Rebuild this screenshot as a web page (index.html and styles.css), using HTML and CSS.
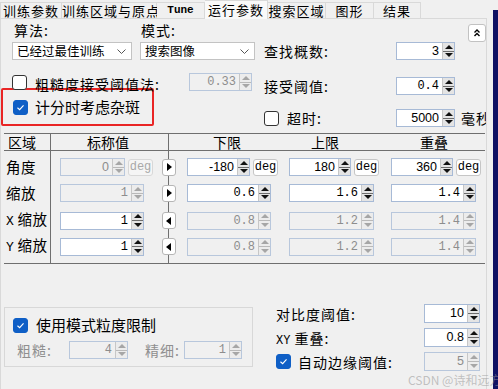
FILE: index.html
```html
<!DOCTYPE html>
<html lang="zh-CN">
<head>
    <meta charset="UTF-8">
    <meta name="viewport" content="width=device-width, initial-scale=1.0">
    <title>运行参数</title>
    <link rel="stylesheet" href="styles.css">
</head>
<body>
    <div class="window">
        <div class="tabs">
            <div class="tab tab-62">训练参数</div>
            <div class="tab tab-95">训练区域与原点</div>
            <div class="tab tab-48 latin">Tune</div>
            <div class="tab tab-63 active">运行参数</div>
            <div class="tab tab-58">搜索区域</div>
            <div class="tab tab-48">图形</div>
            <div class="tab tab-47">结果</div>
            <div class="tab-fill"></div>
        </div>

        <div class="panel">
            <div class="top">
                <div class="top-left">
                    <div class="pair labels"><span>算法:</span><span>模式:</span></div>
                    <div class="pair combos">
                        <div class="combo">已经过最佳训练
                            <svg viewBox="0 0 9 5"><polyline points="0.5,0.5 4.5,4.5 8.5,0.5" fill="none" stroke="#555" stroke-width="1"/></svg>
                        </div>
                        <div class="combo">搜索图像
                            <svg viewBox="0 0 9 5"><polyline points="0.5,0.5 4.5,4.5 8.5,0.5" fill="none" stroke="#555" stroke-width="1"/></svg>
                        </div>
                    </div>
                    <div class="rough">
                        <span class="cb"></span>
                        <span class="rough-label">粗糙度接受阈值法:</span>
                        <div class="spin w63 off"><span class="val mono">0.33</span><span class="arrows"><i class="up"></i><i class="down"></i></span></div>
                    </div>
                    <div class="highlight">
                        <span class="cb on"><svg viewBox="0 0 15 15"><polyline points="4,7.8 6.5,10 11,5" fill="none" stroke="#fff" stroke-width="1.3"/></svg></span>
                        <span class="big">计分时考虑杂斑</span>
                    </div>
                </div>

                <div class="top-right">
                    <div class="collapse-row">
                        <button class="collapse">
                            <svg viewBox="0 0 10 10"><polyline points="2.5,4.5 5,2 7.5,4.5" fill="none" stroke="#000" stroke-width="1.4"/><polyline points="2.5,8 5,5.5 7.5,8" fill="none" stroke="#000" stroke-width="1.4"/></svg>
                        </button>
                    </div>
                    <div class="field">
                        <span class="field-label">查找概数:</span>
                        <div class="spin w59"><span class="val">3</span><span class="arrows"><i class="up"></i><i class="down"></i></span></div>
                    </div>
                    <div class="field accept">
                        <span class="field-label">接受阈值:</span>
                        <div class="spin w59"><span class="val mono">0.4</span><span class="arrows"><i class="up"></i><i class="down"></i></span></div>
                    </div>
                    <div class="field timeout">
                        <span class="cb"></span>
                        <span class="timeout-label">超时:</span>
                        <div class="spin w59"><span class="val">5000</span><span class="arrows"><i class="up"></i><i class="down"></i></span></div>
                        <span class="unit">毫秒</span>
                    </div>
                </div>
            </div>

            <div class="grid-table">
                <div class="thead">
                    <span>区域</span><span>标称值</span><span>下限</span><span>上限</span><span>重叠</span>
                </div>
                <div class="tbody">
                    <div class="trow">
                        <span class="rlabel">角度</span>
                        <div class="cell">
                            <div class="spin w65 off"><span class="val">0</span><span class="arrows"><i class="up"></i><i class="down"></i></span></div>
                            <span class="deg off">deg</span>
                        </div>
                        <div class="cell"><span class="nav right"></span></div>
                        <div class="cell">
                            <div class="spin w63"><span class="val">-180</span><span class="arrows"><i class="up"></i><i class="down"></i></span></div>
                            <span class="deg">deg</span>
                        </div>
                        <div class="cell">
                            <div class="spin w62"><span class="val">180</span><span class="arrows"><i class="up"></i><i class="down"></i></span></div>
                            <span class="deg">deg</span>
                        </div>
                        <div class="cell">
                            <div class="spin w62"><span class="val">360</span><span class="arrows"><i class="up"></i><i class="down"></i></span></div>
                            <span class="deg">deg</span>
                        </div>
                    </div>
                    <div class="trow">
                        <span class="rlabel">缩放</span>
                        <div class="cell"><div class="spin w84 off"><span class="val mono">1</span><span class="arrows"><i class="up"></i><i class="down"></i></span></div></div>
                        <div class="cell"><span class="nav right"></span></div>
                        <div class="cell"><div class="spin w84"><span class="val mono">0.6</span><span class="arrows"><i class="up"></i><i class="down"></i></span></div></div>
                        <div class="cell"><div class="spin w85"><span class="val mono">1.6</span><span class="arrows"><i class="up"></i><i class="down"></i></span></div></div>
                        <div class="cell"><div class="spin w85"><span class="val mono">1.4</span><span class="arrows"><i class="up"></i><i class="down"></i></span></div></div>
                    </div>
                    <div class="trow">
                        <span class="rlabel"><span class="mono">X</span> 缩放</span>
                        <div class="cell"><div class="spin w84"><span class="val mono">1</span><span class="arrows"><i class="up"></i><i class="down"></i></span></div></div>
                        <div class="cell"><span class="nav left"></span></div>
                        <div class="cell"><div class="spin w84 off"><span class="val mono">0.8</span><span class="arrows"><i class="up"></i><i class="down"></i></span></div></div>
                        <div class="cell"><div class="spin w85 off"><span class="val mono">1.2</span><span class="arrows"><i class="up"></i><i class="down"></i></span></div></div>
                        <div class="cell"><div class="spin w85 off"><span class="val mono">1.4</span><span class="arrows"><i class="up"></i><i class="down"></i></span></div></div>
                    </div>
                    <div class="trow">
                        <span class="rlabel"><span class="mono">Y</span> 缩放</span>
                        <div class="cell"><div class="spin w84"><span class="val mono">1</span><span class="arrows"><i class="up"></i><i class="down"></i></span></div></div>
                        <div class="cell"><span class="nav left"></span></div>
                        <div class="cell"><div class="spin w84 off"><span class="val mono">0.8</span><span class="arrows"><i class="up"></i><i class="down"></i></span></div></div>
                        <div class="cell"><div class="spin w85 off"><span class="val mono">1.2</span><span class="arrows"><i class="up"></i><i class="down"></i></span></div></div>
                        <div class="cell"><div class="spin w85 off"><span class="val mono">1.4</span><span class="arrows"><i class="up"></i><i class="down"></i></span></div></div>
                    </div>
                </div>
            </div>

            <div class="bottom">
                <div class="group">
                    <div class="group-head">
                        <span class="cb on"><svg viewBox="0 0 15 15"><polyline points="4,7.8 6.5,10 11,5" fill="none" stroke="#fff" stroke-width="1.3"/></svg></span>
                        <span class="big">使用模式粒度限制</span>
                    </div>
                    <div class="group-row">
                        <span class="dim coarse">粗糙:</span>
                        <div class="spin w59 off"><span class="val mono">4</span><span class="arrows"><i class="up"></i><i class="down"></i></span></div>
                        <span class="dim fine">精细:</span>
                        <div class="spin w58 off"><span class="val mono">1</span><span class="arrows"><i class="up"></i><i class="down"></i></span></div>
                    </div>
                </div>
                <div class="bottom-right">
                    <div class="brow">
                        <span class="brow-label">对比度阈值:</span>
                        <div class="spin w56"><span class="val">10</span><span class="arrows"><i class="up"></i><i class="down"></i></span></div>
                    </div>
                    <div class="brow">
                        <span class="brow-label"><span class="mono">XY</span> 重叠:</span>
                        <div class="spin w56"><span class="val">0.8</span><span class="arrows"><i class="up"></i><i class="down"></i></span></div>
                    </div>
                    <div class="brow">
                        <span class="cb on"><svg viewBox="0 0 15 15"><polyline points="4,7.8 6.5,10 11,5" fill="none" stroke="#fff" stroke-width="1.3"/></svg></span>
                        <span class="auto-label">自动边缘阈值:</span>
                        <div class="spin w56 off"><span class="val">5</span><span class="arrows"><i class="up"></i><i class="down"></i></span></div>
                    </div>
                </div>
            </div>
        </div>
    </div>
    <div class="strip"></div>
    <div class="watermark">CSDN @诗和远方ya</div>
</body>
</html>
```

FILE: styles.css
```css
* {
    box-sizing: border-box;
}

body {
    margin: 0;
    width: 498px;
    height: 389px;
    overflow: hidden;
    display: flex;
    position: relative;
    background: #f0f0f0;
    color: #000;
    font-family: "Noto Sans CJK SC", "Noto Sans", sans-serif;
}

.mono {
    font-family: "Liberation Mono", monospace;
    font-size: 13px;
    letter-spacing: 0;
}

.window {
    width: 487px;
    flex: none;
}

.strip {
    width: 5px;
    margin: 10px 0 0 6px;
    background: #0f1163;
    flex: none;
}

/* tabs */
.tabs {
    display: flex;
    align-items: flex-end;
    height: 19px;
}

.tab {
    height: 17px;
    border: 1px solid #d9d9d9;
    border-left: none;
    background: #f0f0f0;
    font-size: 13px;
    letter-spacing: 1px;
    line-height: 15px;
    text-align: center;
    white-space: nowrap;
}

.tab:first-child { border-left: 1px solid #d9d9d9; }
.tab.latin { font-family: "Liberation Mono", monospace; font-size: 11px; font-weight: bold; letter-spacing: 0; }
.tab.active { height: 19px; border-bottom: none; background: #f9f9f9; line-height: 17px; }

.tab-47 { width: 47px; }
.tab-48 { width: 48px; }
.tab-58 { width: 58px; }
.tab-62 { width: 62px; }
.tab-63 { width: 63px; }
.tab-95 { width: 95px; }

.tab-fill {
    flex: 1;
    height: 1px;
    background: #d9d9d9;
}

.panel {
    height: 370px;
    border-left: 1px solid #d9d9d9;
    border-right: 1px solid #d9d9d9;
    padding-left: 11px;
    overflow: hidden;
}

/* top section */
.top {
    display: flex;
    gap: 9px;
}

.top-left {
    width: 243px;
    flex: none;
}

.top-right {
    flex: 1;
    font-size: 14px;
    letter-spacing: 1px;
}

.pair {
    display: grid;
    grid-template-columns: 120px 115px;
    column-gap: 8px;
}

.labels {
    margin-top: 3px;
    height: 16px;
    font-size: 14px;
    letter-spacing: 1px;
    line-height: 16px;
}

.labels span { padding-left: 2px; }
.labels span + span { padding-left: 1px; }

.combos {
    margin-top: 4px;
}

.combo {
    height: 18px;
    display: flex;
    align-items: center;
    justify-content: space-between;
    padding: 0 5px 0 4px;
    border: 1px solid #c3c3c3;
    background: #fff;
    font-size: 12.5px;
    line-height: 16px;
}

.combo svg {
    width: 9px;
    height: 5px;
}

.cb {
    width: 15px;
    height: 15px;
    flex: none;
    display: flex;
    border: 1px solid #333;
    border-radius: 3px;
    background: #fff;
}

.cb.on {
    border-color: #0f5fc6;
    background: #0f5fc6;
}

.cb svg {
    width: 13px;
    height: 13px;
}

.rough {
    display: flex;
    align-items: flex-start;
    height: 18px;
    margin-top: 13px;
}

.rough .cb { margin-top: 2px; }

.rough-label {
    width: 154px;
    margin: 2px 0 0 8px;
    font-size: 14px;
    letter-spacing: 1px;
    line-height: 18px;
}

.highlight {
    display: flex;
    align-items: center;
    width: 153px;
    height: 38px;
    margin: -3px 0 0 -11px;
    padding-left: 10px;
    border: 2px solid #e92525;
    border-radius: 2px;
}

.big {
    margin-left: 7px;
    font-size: 15px;
    line-height: 16px;
}

.collapse-row {
    display: flex;
    justify-content: flex-end;
    margin-top: 5px;
    padding-right: 5px;
}

.collapse {
    width: 18px;
    height: 18px;
    padding: 0;
    display: flex;
    align-items: center;
    justify-content: center;
    border: 1px solid #c2c2c2;
    border-radius: 3px;
    background: #fff;
}

.collapse svg {
    width: 10px;
    height: 10px;
}

.field {
    display: flex;
    align-items: center;
    height: 18px;
}

.field-label { width: 132px; }
.field.accept { margin-top: 17px; }
.field.timeout { margin-top: 14px; }

.timeout-label {
    width: 109px;
    margin-left: 8px;
}

.unit {
    margin-left: 6px;
    white-space: nowrap;
}

/* spin boxes */
.spin {
    height: 18px;
    flex: none;
    display: flex;
    border: 1px solid #a7bad6;
    background: #fff;
    letter-spacing: 0;
}

.spin .val {
    flex: 1;
    padding-right: 3px;
    text-align: right;
    font-family: "Liberation Sans", sans-serif;
    font-size: 12.5px;
    line-height: 16px;
}

.spin .val.mono {
    font-family: "Liberation Mono", monospace;
    font-size: 12px;
}

.spin.off {
    border-color: #b8c7dc;
    background: #f0f0f0;
    color: #8d8d8d;
}

.arrows {
    width: 12px;
    flex: none;
    display: flex;
    flex-direction: column;
    border-left: 1px solid #c7c7c7;
    background: #e4e4e4;
}

.arrows i {
    flex: 1;
    display: flex;
    align-items: center;
    justify-content: center;
}

.arrows .up { border-bottom: 1px solid #6d6d6d; }

.arrows i::before {
    content: "";
    border-left: 4px solid transparent;
    border-right: 4px solid transparent;
}

.arrows .up::before { border-bottom: 4px solid #111; }
.arrows .down::before { border-top: 4px solid #111; }

.off .arrows { background: #ececec; }
.off .arrows .up { border-bottom-color: #b9b9b9; }
.off .arrows .up::before { border-bottom-color: #a6a6a6; }
.off .arrows .down::before { border-top-color: #a6a6a6; }

.w56 { width: 56px; }
.w58 { width: 58px; }
.w59 { width: 59px; }
.w62 { width: 62px; }
.w63 { width: 63px; }
.w65 { width: 65px; }
.w84 { width: 84px; }
.w85 { width: 85px; }

/* range table */
.grid-table {
    width: 481px;
    margin: 6px 0 0 -8px;
    border-top: 1px solid #6f6f6f;
    border-bottom: 1px solid #6f6f6f;
    background:
        linear-gradient(#6f6f6f, #6f6f6f) 46px 0 / 1px 100% no-repeat,
        linear-gradient(#6f6f6f, #6f6f6f) 164px 0 / 1px 100% no-repeat;
}

.thead {
    display: grid;
    grid-template-columns: 46px 118px 121px 102px 1fr;
    height: 17px;
    border-bottom: 1px solid #6f6f6f;
    font-size: 14px;
    line-height: 16px;
}

.thead span:nth-child(1) { padding-left: 4px; }
.thead span:nth-child(2) { padding-left: 37px; }
.thead span:nth-child(3) { padding-left: 45px; }
.thead span:nth-child(4) { padding-left: 22px; }
.thead span:nth-child(5) { padding-left: 29px; }

.tbody {
    display: flex;
    flex-direction: column;
    gap: 8px;
    padding: 7px 0 9px;
}

.trow {
    display: grid;
    grid-template-columns: 56px 102px 25px 102px 102px 1fr;
    align-items: center;
    height: 18px;
}

.rlabel {
    padding-left: 2px;
    font-size: 14.5px;
    letter-spacing: 0.5px;
    line-height: 18px;
    white-space: nowrap;
}

.cell {
    display: flex;
    align-items: center;
    gap: 3px;
}

.deg {
    width: 25px;
    height: 17px;
    flex: none;
    display: flex;
    align-items: center;
    justify-content: center;
    border: 1px solid #c6c6c6;
    border-radius: 3px;
    background: #fff;
    font-family: "Liberation Mono", monospace;
    font-size: 12px;
}

.deg.off {
    border-color: #d8d8d8;
    background: #f5f5f5;
    color: #a8a8a8;
}

.nav {
    width: 14px;
    height: 17px;
    display: flex;
    align-items: center;
    justify-content: center;
    border: 1px solid #b6b6b6;
    border-radius: 3px;
    background: #fff;
}

.nav::before {
    content: "";
    border-top: 4.5px solid transparent;
    border-bottom: 4.5px solid transparent;
}

.nav.right::before { border-left: 5px solid #000; margin-left: 1px; }
.nav.left::before { border-right: 5px solid #000; margin-right: 1px; }

/* bottom section */
.bottom {
    display: flex;
    align-items: flex-start;
}

.group {
    width: 249px;
    height: 60px;
    flex: none;
    margin: 43px 0 0 -8px;
    padding: 9px 0 0 8px;
    border: 1px solid #d8d8d8;
}

.group-head {
    display: flex;
    align-items: center;
    height: 16px;
}

.group-head .big { margin-left: 8px; }

.group-row {
    display: flex;
    align-items: center;
    height: 18px;
    margin-top: 8px;
}

.dim {
    color: #8f8f8f;
    font-size: 14px;
    letter-spacing: 1px;
}

.coarse { width: 52px; margin-left: 4px; }
.fine { width: 39px; margin-left: 17px; }

.bottom-right {
    display: flex;
    flex-direction: column;
    gap: 5px;
    margin: 40px 0 0 23px;
    font-size: 14px;
    letter-spacing: 1px;
}

.brow {
    display: flex;
    align-items: center;
    height: 19px;
}

.brow .spin { height: 19px; }
.brow .spin .val { line-height: 17px; }

.brow-label { width: 148px; }
.brow-label .mono { font-size: 12px; }

.auto-label {
    width: 126px;
    margin-left: 7px;
}

.watermark {
    position: absolute;
    left: 408px;
    top: 371px;
    font-size: 12px;
    color: rgba(150, 150, 150, 0.55);
    white-space: nowrap;
}
```
